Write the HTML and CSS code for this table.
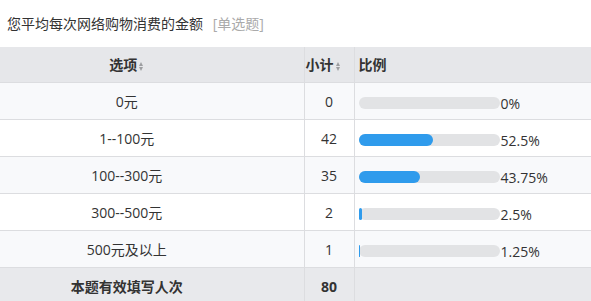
FILE: index.html
```html
<!DOCTYPE html>
<html lang="zh">
<head>
<meta charset="utf-8">
<link rel="stylesheet" href="styles.css">
</head>
<body>
<div class="title">您平均每次网络购物消费的金额 <span class="type">[单选题]</span></div>
<table class="stats">
  <colgroup><col class="c1"><col class="c2"><col class="c3"></colgroup>
  <thead>
    <tr>
      <th class="opt">选项<span class="sort"></span></th>
      <th class="left sub">小计<span class="sort"></span></th>
      <th class="left">比例</th>
    </tr>
  </thead>
  <tbody>
    <tr class="odd"><td class="opt">0元</td><td class="center">0</td><td><div class="ratio"><span class="bar"><span class="fill" style="width:0%"></span></span><span class="pct">0%</span></div></td></tr>
    <tr><td class="opt">1--100元</td><td class="center">42</td><td><div class="ratio"><span class="bar"><span class="fill" style="width:52.5%"></span></span><span class="pct">52.5%</span></div></td></tr>
    <tr class="odd"><td class="opt">100--300元</td><td class="center">35</td><td><div class="ratio"><span class="bar"><span class="fill" style="width:43.75%"></span></span><span class="pct">43.75%</span></div></td></tr>
    <tr><td class="opt">300--500元</td><td class="center">2</td><td><div class="ratio"><span class="bar"><span class="fill" style="width:2.5%"></span></span><span class="pct">2.5%</span></div></td></tr>
    <tr class="odd"><td class="opt">500元及以上</td><td class="center">1</td><td><div class="ratio"><span class="bar"><span class="fill" style="width:1.25%"></span></span><span class="pct">1.25%</span></div></td></tr>
    <tr class="total"><td class="opt">本题有效填写人次</td><td class="center">80</td><td></td></tr>
  </tbody>
</table>
</body>
</html>
```
FILE: styles.css
```css
html, body {
  margin: 0;
  padding: 0;
  background: #fff;
}
body {
  font-family: "Open Sans", "Noto Sans CJK SC", sans-serif;
  color: #333;
  font-size: 14px;
  width: 591px;
  overflow: hidden;
}
.title {
  height: 47px;
  box-sizing: border-box;
  padding: 14px 0 0 7px;
  line-height: 20px;
  font-size: 14px;
  color: #333;
  white-space: nowrap;
}
.type {
  color: #aaa;
  margin-left: 6px;
}
.stats {
  border-collapse: collapse;
  table-layout: fixed;
  width: 700px;
}
.c1 { width: 304px; }
.c2 { width: 50px; }
.c3 { width: 346px; }
.stats th, .stats td {
  border: 1px solid #dcdde0;
  padding: 0;
  white-space: nowrap;
  box-sizing: border-box;
}
.stats tr > :first-child { border-left: none; }
.stats thead th {
  background: #e6e7ea;
  height: 35px;
  font-weight: bold;
  font-size: 14px;
  border-top: none;
}
.stats th.left { text-align: left; padding-left: 4px; }
.stats th.sub { padding-left: 1px; }
.stats .center { text-align: center; }
.stats .opt { text-align: center; padding-right: 50px; }
.stats td {
  height: 37px;
  line-height: 20px;
  background: #fff;
  padding-top: 2px;
}
.stats tr.odd td { background: #f8f9fb; }
.stats tr.total td {
  background: #e8e9ec;
  font-weight: bold;
}
.sort {
  display: inline-block;
  width: 5px;
  height: 9px;
  margin-left: 2px;
  vertical-align: -1px;
  position: relative;
}
.sort::before, .sort::after {
  content: "";
  position: absolute;
  left: 0;
  border-left: 2.5px solid transparent;
  border-right: 2.5px solid transparent;
}
.sort::before { top: 0; border-bottom: 4px solid #9d9ea1; }
.sort::after { bottom: 0; border-top: 4px solid #9d9ea1; }
.ratio {
  display: flex;
  align-items: center;
  padding: 2px 0 0 4px;
}
.bar {
  display: block;
  width: 141px;
  height: 12px;
  border-radius: 6px;
  background: #e2e3e5;
}
.fill {
  display: block;
  height: 12px;
  border-radius: 6px;
  background: #2f9bec;
}
.pct {
  margin-left: 1px;
  padding-top: 2px;
}
```
